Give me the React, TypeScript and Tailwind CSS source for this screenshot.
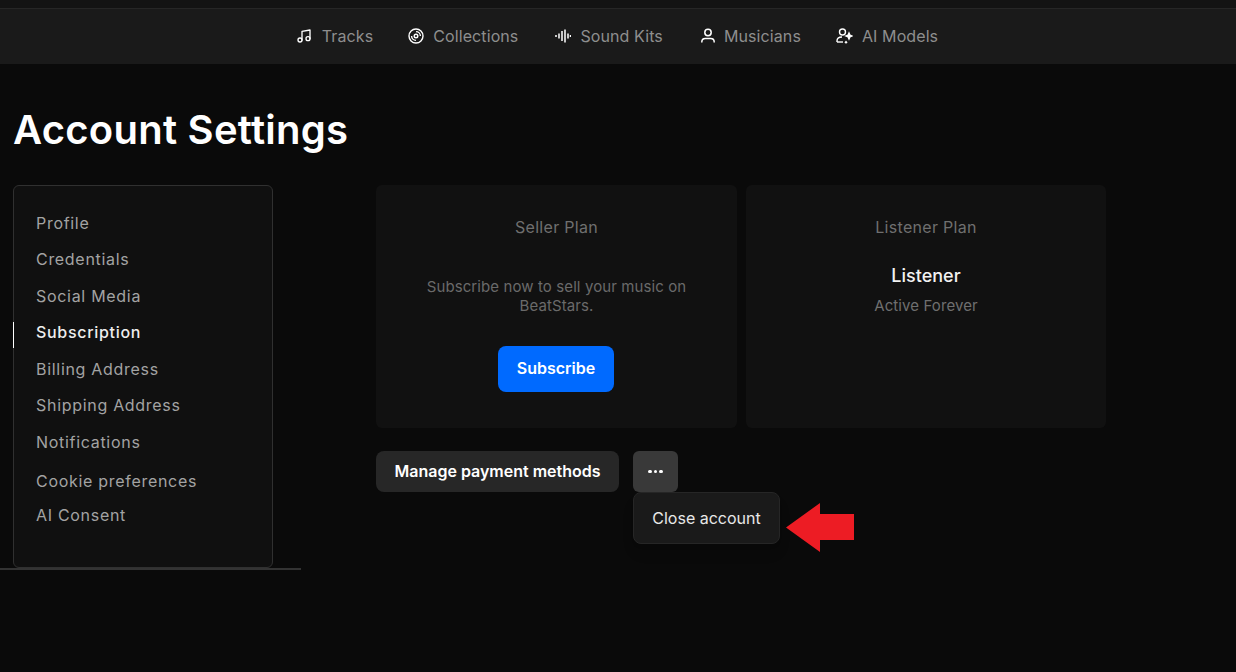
import { Music } from "lucide-react";

const sans = "font-['Inter','Liberation_Sans',sans-serif]";

function DiscIcon() {
  return (
    <svg width="16" height="16" viewBox="0 0 16 16" fill="none" stroke="currentColor" strokeWidth="1.4">
      <circle cx="8" cy="8" r="7" />
      <circle cx="8" cy="8" r="1.8" />
      <path d="M8 3.6A4.4 4.4 0 0 1 12.4 8M3.6 8A4.4 4.4 0 0 0 8 12.4" />
    </svg>
  );
}

function WaveIcon() {
  return (
    <svg width="16" height="16" viewBox="0 0 16 16" fill="none" stroke="currentColor" strokeWidth="1.5">
      <path d="M1 7v2M4 5.500v5M7 3v10M10 1.500v13M13 5.500v5M15.500 7v2" />
    </svg>
  );
}

function PersonIcon() {
  return (
    <svg width="16" height="16" viewBox="0 0 16 16" fill="none" stroke="currentColor" strokeWidth="1.5">
      <circle cx="8" cy="4.500" r="3.200" />
      <path d="M1.800 14.500v-.5c0-2 1.500-3.500 3.500-3.500h5.400c2 0 3.500 1.500 3.500 3.500v.5" />
    </svg>
  );
}

function AiUserIcon() {
  return (
    <svg width="17" height="16" viewBox="0 0 17 16" fill="none" stroke="currentColor" strokeWidth="1.4">
      <circle cx="6.500" cy="4" r="3" />
      <path d="M1 14v-1c0-2.500 2-4 5-4" />
      <path d="M1 14h6" />
      <path d="M13 5l.9 2.100 2.100.9-2.100.9-.9 2.100-.9-2.100-2.100-.9 2.100-.9z" fill="currentColor" />
      <path d="M10 12.500l.7 1 1 .7-1 .7-.7 1-.7-1-1-.7 1-.7z" fill="currentColor" stroke="none" />
    </svg>
  );
}

const navItems = [
  { label: "Tracks", icon: <Music size={16} strokeWidth={2} />, gap: "gap-[10px]" },
  { label: "Collections", icon: <DiscIcon />, gap: "gap-[9px] -ml-[2px]" },
  { label: "Sound Kits", icon: <WaveIcon />, gap: "gap-[9px]" },
  { label: "Musicians", icon: <PersonIcon />, gap: "gap-[8px]" },
  { label: "AI Models", icon: <AiUserIcon />, gap: "gap-[9px] -ml-[2px]" },
];

const sideItems = [
  { label: "Profile", gap: "" },
  { label: "Credentials", gap: "" },
  { label: "Social Media", gap: "mt-px" },
  { label: "Subscription", gap: "", active: true },
  { label: "Billing Address", gap: "mt-px" },
  { label: "Shipping Address", gap: "" },
  { label: "Notifications", gap: "mt-px" },
  { label: "Cookie preferences", gap: "mt-[3px]" },
  { label: "AI Consent", gap: "-mt-[2px]" },
];

export default function App() {
  return (
    <div className={`h-[672px] w-[1236px] overflow-hidden bg-[#0a0a0a] text-white ${sans}`}>
      <div className="h-[9px] border-b border-[#262626] bg-[#131313]" />
      <nav className="flex h-[55px] items-center justify-center gap-[37px] bg-[#1a1a1a] pb-[2px] pr-[2px]">
        {navItems.map((item) => (
          <div key={item.label} className={`flex items-center ${item.gap}`}>
            <span className="text-white">{item.icon}</span>
            <span className="text-[16px] tracking-[0.1px] text-[#8e8e8e]">{item.label}</span>
          </div>
        ))}
      </nav>

      <h1 className="ml-[13px] mt-[41px] text-[40px] font-semibold leading-[50px] tracking-[0.25px]">Account Settings</h1>

      <div className="mt-[30px] flex">
        <div className="w-[301px] shrink-0 border-b-2 border-[#333333] pl-[13px]">
          <aside className="h-[383px] w-[260px] rounded-md border border-[#303030] bg-[#101010] pt-[19px]">
            {sideItems.map((item) => (
              <div
                key={item.label}
                className={`relative flex h-[36px] items-center pl-[22px] text-[16px] tracking-[0.7px] ${item.gap} ${
                  item.active ? "font-medium text-[#eeeeee]" : "text-[#a3a3a3]"
                }`}
              >
                {item.active && <span className="absolute left-[-1px] top-[8px] h-[26px] w-px bg-white" />}
                {item.label}
              </div>
            ))}
          </aside>
        </div>

        <main className="ml-[75px] w-[730px]">
          <div className="flex gap-[9px]">
            <section className="flex h-[243px] w-[361px] flex-col items-center rounded-md bg-[#111111] pt-[32px]">
              <h2 className="text-[16px] leading-[20px] tracking-[0.3px] text-[#6f6f6f]">Seller Plan</h2>
              <p className="mt-[40px] w-[280px] text-center text-[15px] leading-[19px] tracking-[0.1px] text-[#6a6a6a]">
                Subscribe now to sell your music on BeatStars.
              </p>
              <button className="mr-px mt-[31px] h-[46px] w-[116px] rounded-lg bg-[#006aff] pb-[2px] text-[16px] font-semibold text-white">
                Subscribe
              </button>
            </section>
            <section className="flex h-[243px] w-[360px] flex-col items-center rounded-md bg-[#111111] pt-[32px]">
              <h2 className="text-[16px] leading-[20px] tracking-[0.3px] text-[#6f6f6f]">Listener Plan</h2>
              <p className="mt-[28px] text-[18px] font-medium leading-[22px] text-[#f2f2f2]">Listener</p>
              <p className="mt-[9px] text-[15px] leading-[19px] tracking-[0.1px] text-[#6f6f6f]">Active Forever</p>
            </section>
          </div>

          <div className="relative mt-[23px] flex gap-[14px]">
            <button className="h-[41px] w-[243px] rounded-lg bg-[#272727] pb-[2px] text-[16px] font-semibold text-white">
              Manage payment methods
            </button>
            <button className="flex h-[41px] w-[45px] items-center justify-center gap-[2px] rounded-md bg-[#393939]">
              <span className="h-[3.5px] w-[3.5px] rounded-full bg-white" />
              <span className="h-[3.5px] w-[3.5px] rounded-full bg-white" />
              <span className="h-[3.5px] w-[3.5px] rounded-full bg-white" />
            </button>
            <div className="absolute left-[257px] top-[41px] flex h-[52px] w-[147px] items-center justify-center rounded-lg border border-[#262626] bg-[#1a1a1a] text-[16px] text-[#e8e8e8] shadow-lg">
              Close account
            </div>
            <svg className="absolute left-[410px] top-[52px]" width="68" height="49" viewBox="0 0 68 49">
              <path d="M0 24.500L34 0v11h34v26H34v12z" fill="#ed1c24" />
            </svg>
          </div>
        </main>
      </div>
    </div>
  );
}
